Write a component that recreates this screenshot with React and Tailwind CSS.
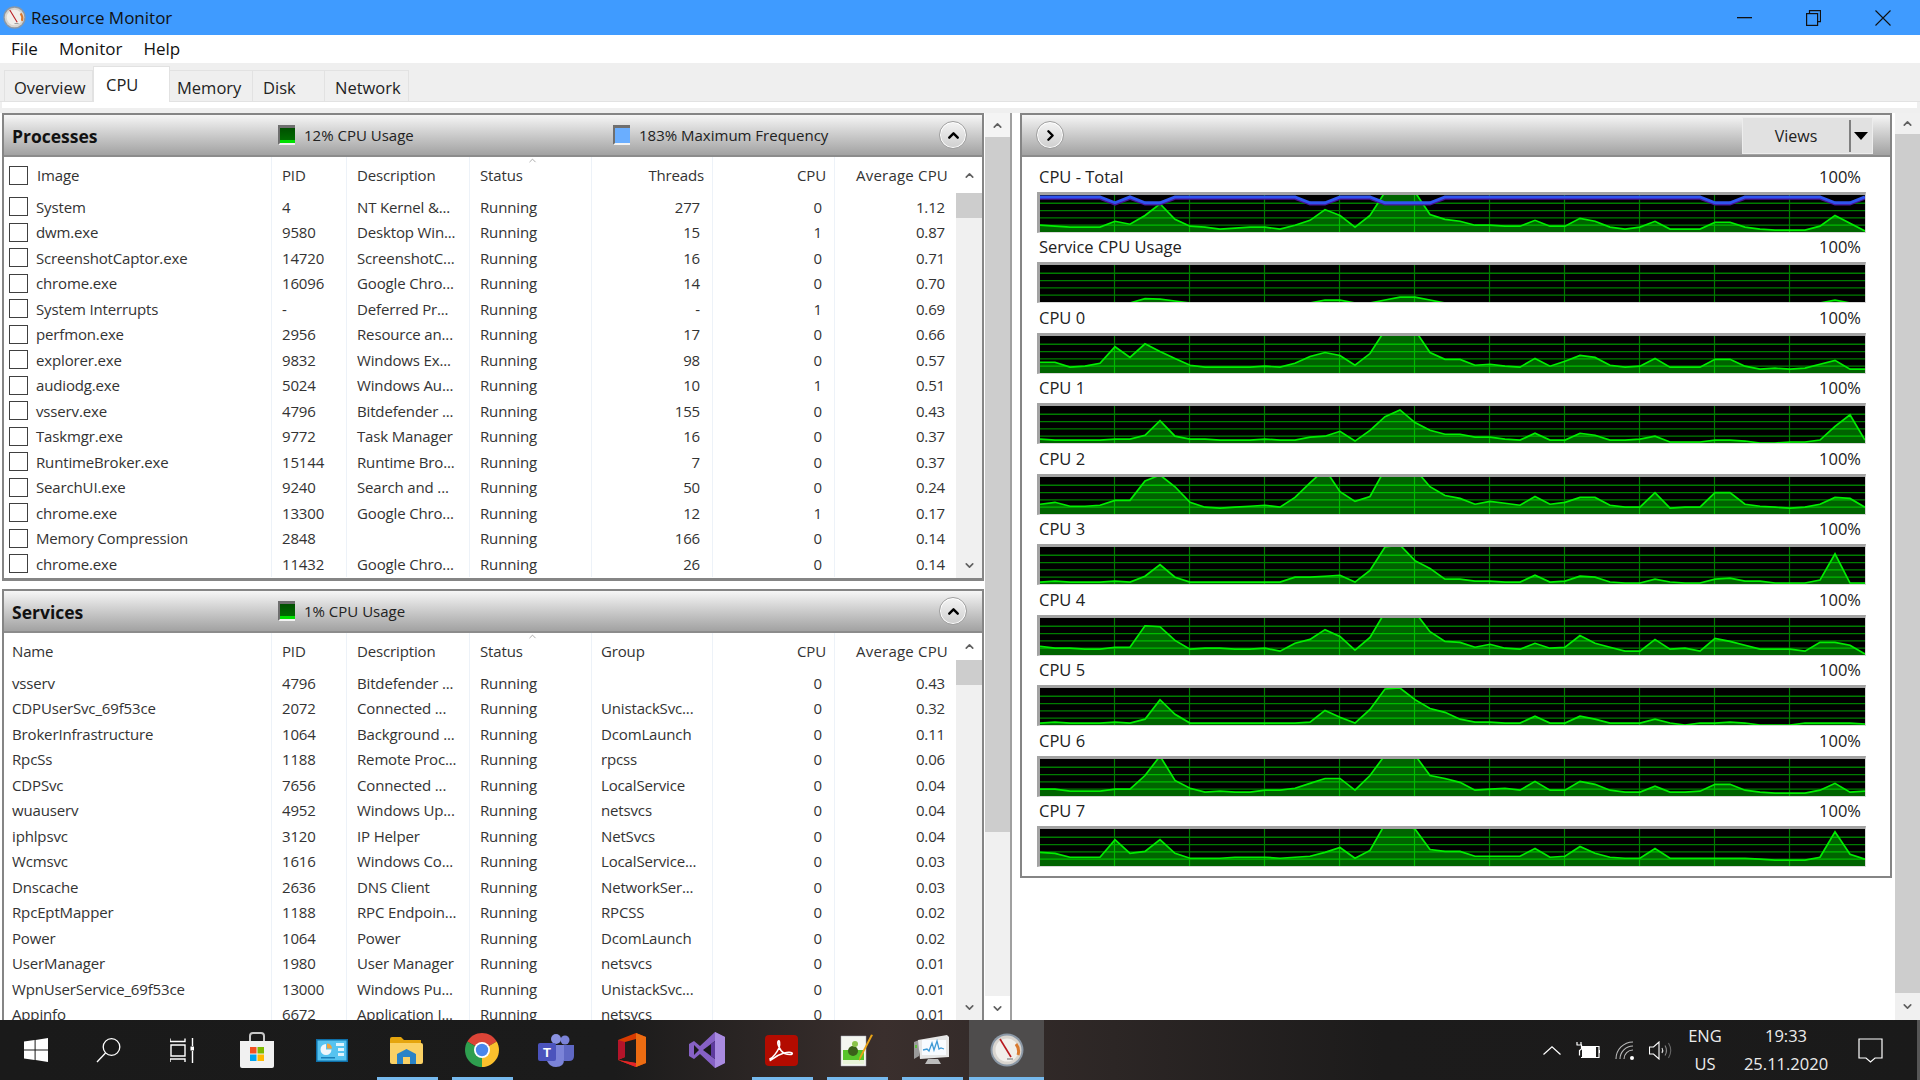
import React from 'react';
import { ChevronUp, ChevronDown, ChevronRight, ChevronUp as Caret } from 'lucide-react';

const COLS = 'grid grid-cols-[268px_75px_123px_122px_121px_122px_121px]';
const CELL = 'h-full border-r border-[#edf2f8] whitespace-nowrap overflow-hidden flex items-center';

const PROCESSES = [
  ['System', '4', 'NT Kernel &...', '277', '0', '1.12'],
  ['dwm.exe', '9580', 'Desktop Win...', '15', '1', '0.87'],
  ['ScreenshotCaptor.exe', '14720', 'ScreenshotC...', '16', '0', '0.71'],
  ['chrome.exe', '16096', 'Google Chro...', '14', '0', '0.70'],
  ['System Interrupts', '-', 'Deferred Pr...', '-', '1', '0.69'],
  ['perfmon.exe', '2956', 'Resource an...', '17', '0', '0.66'],
  ['explorer.exe', '9832', 'Windows Ex...', '98', '0', '0.57'],
  ['audiodg.exe', '5024', 'Windows Au...', '10', '1', '0.51'],
  ['vsserv.exe', '4796', 'Bitdefender ...', '155', '0', '0.43'],
  ['Taskmgr.exe', '9772', 'Task Manager', '16', '0', '0.37'],
  ['RuntimeBroker.exe', '15144', 'Runtime Bro...', '7', '0', '0.37'],
  ['SearchUI.exe', '9240', 'Search and ...', '50', '0', '0.24'],
  ['chrome.exe', '13300', 'Google Chro...', '12', '1', '0.17'],
  ['Memory Compression', '2848', '', '166', '0', '0.14'],
  ['chrome.exe', '11432', 'Google Chro...', '26', '0', '0.14'],
];

const SERVICES = [
  ['vsserv', '4796', 'Bitdefender ...', '', '0', '0.43'],
  ['CDPUserSvc_69f53ce', '2072', 'Connected ...', 'UnistackSvc...', '0', '0.32'],
  ['BrokerInfrastructure', '1064', 'Background ...', 'DcomLaunch', '0', '0.11'],
  ['RpcSs', '1188', 'Remote Proc...', 'rpcss', '0', '0.06'],
  ['CDPSvc', '7656', 'Connected ...', 'LocalService', '0', '0.04'],
  ['wuauserv', '4952', 'Windows Up...', 'netsvcs', '0', '0.04'],
  ['iphlpsvc', '3120', 'IP Helper', 'NetSvcs', '0', '0.04'],
  ['Wcmsvc', '1616', 'Windows Co...', 'LocalService...', '0', '0.03'],
  ['Dnscache', '2636', 'DNS Client', 'NetworkSer...', '0', '0.03'],
  ['RpcEptMapper', '1188', 'RPC Endpoin...', 'RPCSS', '0', '0.02'],
  ['Power', '1064', 'Power', 'DcomLaunch', '0', '0.02'],
  ['UserManager', '1980', 'User Manager', 'netsvcs', '0', '0.01'],
  ['WpnUserService_69f53ce', '13000', 'Windows Pu...', 'UnistackSvc...', '0', '0.01'],
  ['Appinfo', '6672', 'Application I...', 'netsvcs', '0', '0.01'],
];

// heights in px above the graph floor, one sample every 15px
const GRAPHS = [
  { name: 'CPU - Total', blue: true, data: [7,6,5,5,5,11,8,17,29,13,6,5,3,4,5,5,3,7,12,23,17,5,17,41,41,41,18,13,11,7,7,6,6,12,6,6,14,11,5,3,5,11,3,3,3,10,10,5,3,2,2,2,6,17,9,1] },
  { name: 'Service CPU Usage', data: [-1,-1,-1,-1,-1,-1,-1,3.5,3,1,-1,-1,-1,-1,-1,-1,-1,-1,-1,2,2,-1,-1,2,5,5,2,-1,-1,-1,-1,-1,-1,-1,-1,-1,-1,-1,-1,-1,-1,-1,-1,-1,-1,-1,-1,-1,-1,-1,-1,-1,-1,2,-1,-1] },
  { name: 'CPU 0', data: [11,11,6,7,10,27,16,30,22,15,8,6,6,6,6,7,6,10,17,21,18,8,20,44,44,44,21,14,14,8,9,7,6,15,7,12,18,16,8,6,7,15,6,6,6,14,14,7,4,5,4,5,9,13,4,4] },
  { name: 'CPU 1', data: [4,3,3,3,3,4,4,8,23,7,4,4,3,3,3,4,3,3,6,7,12,2,13,27,34,21,13,9,9,6,6,4,3,10,3,3,10,8,3,3,4,7,1,1,1,3,3,2,0,0,1,1,3,17,29,3] },
  { name: 'CPU 2', data: [10,12,8,8,9,14,14,34,40,28,12,7,6,7,8,9,7,17,32,46,23,13,18,46,46,46,28,19,16,10,13,11,9,18,10,12,17,17,9,7,7,22,6,7,7,22,22,10,8,7,6,7,10,17,16,7] },
  { name: 'CPU 3', data: [2,3,2,2,2,3,2,8,20,7,2,2,2,2,2,2,2,7,7,8,9,2,14,38,40,24,16,5,5,3,3,2,2,9,2,3,8,7,2,1,1,5,2,1,1,5,6,3,3,1,1,1,4,31,1,1] },
  { name: 'CPU 4', data: [9,7,7,6,6,8,8,30,29,15,6,7,7,6,6,7,4,12,16,26,19,5,18,44,44,44,24,14,13,8,11,7,6,12,7,8,20,12,8,4,4,16,6,7,4,17,14,10,6,6,6,4,13,13,10,1] },
  { name: 'CPU 5', data: [2,3,2,2,2,3,2,6,26,11,2,2,2,2,2,2,2,2,3,15,8,2,16,37,38,26,17,13,6,3,3,2,2,9,2,2,9,6,2,2,2,6,2,0,2,2,3,2,0,0,0,2,2,2,2,1] },
  { name: 'CPU 6', data: [7,7,5,5,5,7,7,21,41,16,8,4,5,4,4,6,6,8,13,18,18,6,21,42,42,42,21,18,14,6,7,8,6,15,6,6,15,12,6,4,4,10,4,4,5,12,12,6,4,3,3,3,6,13,4,5] },
  { name: 'CPU 7', data: [14,13,9,9,9,27,13,15,27,13,8,8,8,9,9,9,8,9,10,14,19,8,16,43,43,38,17,15,15,10,10,10,10,18,9,10,20,13,9,8,8,18,8,8,8,8,8,8,7,6,6,6,9,35,12,7] },
];

const BLUE_DIPS = [5, 7, 8, 18, 19, 23, 24, 25, 26, 45, 46, 53, 54];

const Graph = ({ name, data, blue }) => {
  const pts = data.map((h, i) => `${i * 15},${38 - h}`).join(' ');
  const vLines = [1, 2, 3, 4, 5, 6, 7, 8, 9, 10].map((n) => n * 75 - 0.5);
  const hLines = [8.5, 16, 23.5, 31];
  const bluePts = data.map((_, i) => `${i * 15},${BLUE_DIPS.includes(i) ? 8 : 2}`).join(' ');
  const clipId = 'fill-' + name.replace(/[^a-zA-Z0-9]/g, '');
  const grid = (color) => (
    <>
      {vLines.map((x) => <line key={x} x1={x} x2={x} y1="0" y2="38" stroke={color} strokeWidth="1.2" />)}
      {hLines.map((y) => <line key={y} x1="0" x2="825" y1={y} y2={y} stroke={color} strokeWidth="1.4" />)}
    </>
  );
  return (
    <div className="h-[70.5px] w-[829px] flex flex-col">
      <div className="h-[29.5px] flex items-end justify-between pl-[2px] pr-[5px] pb-[3px] text-[16.5px] text-[#222] leading-[24px]">
        <span>{name}</span>
        <span>100%</span>
      </div>
      <div className="h-[41px] w-[829px] border-t-[3px] border-l-[3px] border-r border-b border-t-[#a3a3a3] border-l-[#a3a3a3] border-r-[#d8d8d8] border-b-[#d8d8d8] bg-black">
        <svg width="825" height="37" viewBox="0 0 825 38" preserveAspectRatio="none" className="block">
          <defs>
            <clipPath id={clipId}><polygon points={`0,38 ${pts} 825,38`} /></clipPath>
          </defs>
          {grid('#007c00')}
          <polygon points={`0,38 ${pts} 825,38`} fill="#006400" />
          <g clipPath={`url(#${clipId})`}>{grid('#00bb00')}</g>
          <polyline points={pts} fill="none" stroke="#00ee00" strokeWidth="1.7" />
          {blue && (
            <>
              <polyline points={bluePts} transform="translate(0,1.6)" fill="none" stroke="#4a1296" strokeWidth="2.5" />
              <polyline points={bluePts} fill="none" stroke="#2f55f0" strokeWidth="3" />
            </>
          )}
        </svg>
      </div>
    </div>
  );
};

const RoundBtn = ({ children }) => (
  <div className="w-[28px] h-[28px] rounded-full border border-[#9f9f9f] bg-linear-to-b from-[#f4f4f4] to-[#cfcfcf] shadow-[inset_0_0_0_1px_#ffffff] flex items-center justify-center text-black">
    {children}
  </div>
);

const Checkbox = () => <span className="w-[19px] h-[19px] shrink-0 border-[1.5px] border-[#404040] bg-white" />;

const GreenChip = () => (
  <span className="w-[17px] h-[20px] border-t-[3px] border-l-[2px] border-[#6f6f6f] border-b-[2px] border-b-[#f2f2f2] bg-[linear-gradient(#004f00_0%,#006c00_78%,#00e000_78%)]" />
);

const PanelHeader = ({ title, children }) => (
  <div className="h-[42px] shrink-0 flex items-center bg-linear-to-b from-[#f6f6f6] to-[#a2a2a2] border-b-2 border-[#8c8c8c] relative">
    <span className="w-[274px] pl-[8px] pt-[2px] font-bold text-[17.5px] text-[#111]">{title}</span>
    {children}
    <div className="ml-auto mr-[15px]">
      <RoundBtn><ChevronUp size={17} strokeWidth={3.4} /></RoundBtn>
    </div>
  </div>
);

const TableScroll = ({ headH }) => (
  <div className="w-[26px] shrink-0 bg-[#f0f0f0] flex flex-col">
    <div className={`${headH} bg-white flex items-center justify-center text-[#606060]`}><ChevronUp size={13} strokeWidth={3} /></div>
    <div className="h-[25px] bg-[#cdcdcd]" />
    <div className="flex-1" />
    <div className="h-[26px] flex items-center justify-center text-[#606060]"><ChevronDown size={13} strokeWidth={3} /></div>
  </div>
);

const HeadCell = ({ children, className = '' }) => <div className={`${CELL} ${className}`}>{children}</div>;

const ProcessesPanel = () => (
  <section className="h-[468px] shrink-0 border-t-2 border-l-2 border-r-2 border-b-[3px] border-[#858585] flex flex-col overflow-hidden bg-white">
    <PanelHeader title="Processes">
      <GreenChip />
      <span className="ml-[9px] w-[309px] text-[15px] text-[#222]">12% CPU Usage</span>
      <span className="w-[17px] h-[20px] border-t-[3px] border-l-[2px] border-[#6f6f6f] border-b-[2px] border-b-[#f2f2f2] bg-[#6aaeff]" />
      <span className="ml-[9px] text-[15px] text-[#222]">183% Maximum Frequency</span>
    </PanelHeader>
    <div className="flex-1 flex min-h-0 text-[15px] text-[#333] tracking-[-0.15px]">
      <div className="w-[952px] shrink-0">
        <div className={`${COLS} h-[37px] relative`}>
          <HeadCell className="pl-[5px] gap-[9px]"><Checkbox />Image</HeadCell>
          <HeadCell className="pl-[10px]">PID</HeadCell>
          <HeadCell className="pl-[10px]">Description</HeadCell>
          <HeadCell className="pl-[10px]">Status</HeadCell>
          <HeadCell className="justify-end pr-[8px]">Threads</HeadCell>
          <HeadCell className="justify-end pr-[8px]">CPU</HeadCell>
          <HeadCell className="justify-end pr-[8px] border-r-0 tracking-[0.2px]">Average CPU</HeadCell>
          <Caret size={11} strokeWidth={1.5} className="absolute left-[523px] -top-[2px] text-[#888]" />
        </div>
        {PROCESSES.map((r, i) => (
          <div key={i} className={`${COLS} h-[25.5px]`}>
            <div className={`${CELL} pl-[5px] gap-[8px]`}><Checkbox />{r[0]}</div>
            <div className={`${CELL} pl-[10px]`}>{r[1]}</div>
            <div className={`${CELL} pl-[10px]`}>{r[2]}</div>
            <div className={`${CELL} pl-[10px]`}>Running</div>
            <div className={`${CELL} justify-end pr-[12px]`}>{r[3]}</div>
            <div className={`${CELL} justify-end pr-[12px]`}>{r[4]}</div>
            <div className={`${CELL} justify-end pr-[11px] border-r-0`}>{r[5]}</div>
          </div>
        ))}
      </div>
      <TableScroll headH="h-[36px]" />
    </div>
  </section>
);

const ServicesPanel = () => (
  <section className="flex-1 min-h-0 border-t-2 border-l-2 border-r-2 border-[#858585] flex flex-col overflow-hidden bg-white">
    <PanelHeader title="Services">
      <GreenChip />
      <span className="ml-[9px] text-[15px] text-[#222]">1% CPU Usage</span>
    </PanelHeader>
    <div className="flex-1 flex min-h-0 text-[15px] text-[#333] tracking-[-0.15px]">
      <div className="w-[952px] shrink-0">
        <div className={`${COLS} h-[37px] relative`}>
          <HeadCell className="pl-[8px]">Name</HeadCell>
          <HeadCell className="pl-[10px]">PID</HeadCell>
          <HeadCell className="pl-[10px]">Description</HeadCell>
          <HeadCell className="pl-[10px]">Status</HeadCell>
          <HeadCell className="pl-[9px]">Group</HeadCell>
          <HeadCell className="justify-end pr-[8px]">CPU</HeadCell>
          <HeadCell className="justify-end pr-[8px] border-r-0 tracking-[0.2px]">Average CPU</HeadCell>
          <Caret size={11} strokeWidth={1.5} className="absolute left-[523px] -top-[2px] text-[#888]" />
        </div>
        {SERVICES.map((r, i) => (
          <div key={i} className={`${COLS} h-[25.5px]`}>
            <div className={`${CELL} pl-[8px]`}>{r[0]}</div>
            <div className={`${CELL} pl-[10px]`}>{r[1]}</div>
            <div className={`${CELL} pl-[10px]`}>{r[2]}</div>
            <div className={`${CELL} pl-[10px]`}>Running</div>
            <div className={`${CELL} pl-[9px]`}>{r[3]}</div>
            <div className={`${CELL} justify-end pr-[12px]`}>{r[4]}</div>
            <div className={`${CELL} justify-end pr-[11px] border-r-0`}>{r[5]}</div>
          </div>
        ))}
      </div>
      <TableScroll headH="h-[27px]" />
    </div>
  </section>
);

const Gauge = ({ size }) => (
  <svg width={size} height={size} viewBox="0 0 34 34">
    <circle cx="17" cy="17" r="16.5" fill="#8b98a6" />
    <circle cx="17" cy="17" r="14.5" fill="#d9d5cf" />
    <circle cx="17" cy="17" r="11.5" fill="#f1efeb" />
    <path d="M26 11a12 12 0 0 1 2 11" fill="none" stroke="#d9792f" strokeWidth="3" />
    <path d="M10 6l11 18" stroke="#b81a1f" strokeWidth="1.6" />
    <path d="M17 26l6 0" stroke="#999" strokeWidth="1.5" />
  </svg>
);

const Slot = ({ w = 'w-[75px]', open, active, children }) => (
  <div className={`${w} h-full relative flex items-center justify-center ${active ? 'bg-[#4e4c4c]' : ''}`}>
    {children}
    {open && <span className={`absolute bottom-0 h-[3px] bg-[#76b9ed] ${active ? 'left-0 right-0' : 'left-[8px] right-[6px]'}`} />}
  </div>
);

const Taskbar = () => (
  <footer className="h-[60px] shrink-0 flex items-center text-[#ececec] bg-[linear-gradient(90deg,#1a1a1a_0%,#1b1b1b_32%,#3a2f2d_46%,#2c2625_58%,#1c1b1b_72%,#1a1a1a_100%)]">
    <Slot w="w-[72px]">
      <svg width="24" height="24" viewBox="0 0 24 24" fill="#fff"><path d="M0 3.6l10.6-1.5v9.4H0zM11.6 2L24 0v11.5H11.6zM0 12.5h10.6v9.5L0 20.4zM11.6 12.5H24V24l-12.4-1.9z" /></svg>
    </Slot>
    <Slot w="w-[72px]">
      <svg width="25" height="25" viewBox="0 0 25 25" fill="none" stroke="#fff" strokeWidth="1.3"><circle cx="15.5" cy="9" r="8.3" /><path d="M9.5 15L1 24" /></svg>
    </Slot>
    <Slot>
      <svg width="24" height="25" viewBox="0 0 24 25" fill="none" stroke="#fff" strokeWidth="1.4"><path d="M0 3.5h15V.5M0 3.5V.5M1 7h14v11H1zM0 24v-3h15v3M22.5 0v8M22.5 13v12" /><rect x="20.5" y="8.5" width="3.5" height="4" fill="#fff" stroke="none" /></svg>
    </Slot>
    <Slot>
      <svg width="36" height="36" viewBox="0 0 36 36"><path d="M11 9V4q0-3 3-3h8q3 0 3 3v5" fill="none" stroke="#c9c9c9" strokeWidth="2" /><path d="M1 9h34v25q0 2-2 2H3q-2 0-2-2z" fill="#f1f1f1" /><rect x="11" y="15" width="6.5" height="6.5" fill="#f25022" /><rect x="18.5" y="15" width="6.5" height="6.5" fill="#7fba00" /><rect x="11" y="22.5" width="6.5" height="6.5" fill="#00a4ef" /><rect x="18.5" y="22.5" width="6.5" height="6.5" fill="#ffb900" /></svg>
    </Slot>
    <Slot>
      <svg width="32" height="23" viewBox="0 0 32 23"><rect width="32" height="23" fill="#0e6fa8" /><rect x="1.5" y="1.5" width="29" height="20" fill="#56c3f0" /><path d="M10 5a5.5 5.5 0 1 0 5.5 5.5H10z" fill="#f0f6fa" /><path d="M11 4.5a5 5 0 0 1 5 5h-5z" fill="#f2a33a" /><rect x="20" y="4" width="8" height="3" fill="#dff3fc" /><rect x="22" y="9" width="6" height="3" fill="#dff3fc" /><rect x="22" y="14" width="6" height="3" fill="#dff3fc" /><rect x="5" y="18" width="14" height="1.5" fill="#1a7fb8" /></svg>
    </Slot>
    <Slot open>
      <svg width="33" height="27" viewBox="0 0 33 27"><path d="M0 2q0-2 2-2h9l3 3h17v5H0z" fill="#e5a50e" /><path d="M0 6h31q2 0 2 2v17q0 2-2 2H2q-2 0-2-2z" fill="#fad165" /><path d="M7 27V17l9.5-5 9.5 5v10h-6v-7h-7v7z" fill="#2a83c7" /><rect x="13" y="20" width="7" height="7" fill="#fad165" /></svg>
    </Slot>
    <Slot open>
      <svg width="34" height="34" viewBox="0 0 34 34"><path d="M17 17L2.3 8.5A17 17 0 0 1 31.7 8.5z" fill="#db4437" /><path d="M17 17L31.7 8.5A17 17 0 0 1 17 34z" fill="#fbc02d" /><path d="M17 17L17 34A17 17 0 0 1 2.3 8.5z" fill="#2e9e4f" /><circle cx="17" cy="17" r="8" fill="#fff" /><circle cx="17" cy="17" r="6.2" fill="#4a86ec" /></svg>
    </Slot>
    <Slot>
      <svg width="37" height="33" viewBox="0 0 37 33"><circle cx="27" cy="6" r="4.5" fill="#7b83d8" /><circle cx="18" cy="5" r="5" fill="#8a92e0" /><path d="M24 11h12v11q0 5-5 5h-5z" fill="#5f68c4" /><path d="M9 11h17v15q0 7-8 7-6 0-9-6z" fill="#7b83d8" /><rect y="9" width="18" height="18" rx="2" fill="#4b53bc" /><text x="9" y="23" fontFamily="'Liberation Sans',sans-serif" fontWeight="700" fontSize="13" fill="#fff" textAnchor="middle">T</text></svg>
    </Slot>
    <Slot>
      <svg width="28" height="34" viewBox="0 0 28 34"><path d="M0 7L18 0l10 4v26l-10 4L0 27l18 3V6L7 9v15l-7 3z" fill="#d83b01" /><path d="M18 0l10 4v26l-10 4z" fill="#eb6c12" /><path d="M0 7l7 2v15l-7 3z" fill="#b3142a" /><path d="M0 27l18 3v4z" fill="#e3242b" /></svg>
    </Slot>
    <Slot>
      <svg width="36" height="36" viewBox="0 0 36 36"><path d="M26 0l10 5v26l-10 5L11 22l-6 5-5-3V12l5-3 6 5z" fill="#8661c5" /><path d="M26 9v18l-12-9z" fill="#1a1a1a" /><path d="M5 13v10l5-5z" fill="#1a1a1a" /><path d="M26 0l10 5v26l-10 5z" fill="#a98be0" /><path d="M26 9v18l-4-3V12z" fill="#5e3a9e" /></svg>
    </Slot>
    <Slot open>
      <svg width="33" height="31" viewBox="0 0 33 31"><rect width="33" height="31" rx="4" fill="#b30b00" /><path d="M5 24q5-3 9-11 1-3 .5-6-.5-2-1.500-.5-1 3 3 9 3 4 9 4 3 0 2-1.500-2-1.500-8 0-7 2-13 7-1 1-.5 0z" fill="none" stroke="#fff" strokeWidth="1.6" /></svg>
    </Slot>
    <Slot open>
      <svg width="34" height="33" viewBox="0 0 34 33"><path d="M1 2h25v30H1z" fill="#f4f6f0" stroke="#aab" strokeWidth=".5" /><path d="M3 16h21v14H3z" fill="#57c42a" /><path d="M3 26h21v4H3z" fill="#e8f4d8" /><circle cx="13" cy="17" r="5" fill="#3b5f1a" /><circle cx="15" cy="10" r="3" fill="#8bc34a" /><path d="M33 1L21 24l-2 3 .5-4L31 .5z" fill="#e8a317" /></svg>
    </Slot>
    <Slot open>
      <svg width="35" height="30" viewBox="0 0 35 30"><path d="M0 7l5-2v16l-5 3z" fill="#9a9a9a" /><path d="M4 5L33 0l2 2v20L6 24z" fill="#e6e6e6" /><rect x="8" y="5" width="24" height="15" fill="#f8fbff" /><path d="M9 15l4-1 2 2 3-8 2 7 3-9 2 8 2-1 3 1" fill="none" stroke="#3f9ad6" strokeWidth="1.3" /><path d="M14 24h10l3 5H11z" fill="#bcbcbc" /><rect x="1" y="10" width="2" height="3" fill="#5fbf3f" /></svg>
    </Slot>
    <Slot open active><Gauge size={34} /></Slot>

    <div className="ml-auto flex items-center h-full">
      <svg width="18" height="9" viewBox="0 0 18 9" fill="none" stroke="#fff" strokeWidth="1.2" className="mr-[15px]"><path d="M.5 8.500L9 .8l8.500 7.700" /></svg>
      <svg width="24" height="17" viewBox="0 0 24 17" fill="none" stroke="#fff" strokeWidth="1.2" className="mr-[15px]"><path d="M5 4.500h18v11H5" /><rect x="6" y="5" width="14" height="10" fill="#fff" stroke="none" /><path d="M1 0v3M5 0v3M.5 3h5v4l-2 1.500v5" /><path d="M23.500 8v3" /></svg>
      <svg width="20" height="19" viewBox="0 0 20 19" fill="none" stroke="#bbb" strokeWidth="1.1" className="mr-[13.5px]"><path d="M1 18A17 17 0 0 1 18 1M5 18A13 13 0 0 1 18 5M9 18a9 9 0 0 1 9-9" /><circle cx="17" cy="17" r="2" fill="#fff" stroke="none" /></svg>
      <svg width="23" height="19" viewBox="0 0 23 19" fill="none" strokeWidth="1.1" className="mr-[8.5px]"><path d="M.5 6h4L10 1v17l-5.500-5h-4z" stroke="#fff" /><path d="M13 7q1.500 2.500 0 5" stroke="#ddd" /><path d="M16 4.500q3 5 0 10" stroke="#888" /><path d="M19.500 2q4.500 7.500 0 15" stroke="#666" /></svg>
      <div className="w-[50px] flex flex-col items-center text-[16.5px] leading-[28px]">
        <span>ENG</span>
        <span>US</span>
      </div>
      <div className="w-[100px] ml-[6px] flex flex-col items-center text-[16.5px] leading-[28px]">
        <span>19:33</span>
        <span>25.11.2020</span>
      </div>
      <svg width="25" height="25" viewBox="0 0 25 25" fill="none" stroke="#fff" strokeWidth="1.2" className="ml-[21.5px] mr-[34.5px]"><path d="M1 1h23v19h-7l-4.500 4-4.500-4H1z" /></svg>
      <span className="w-[3px] h-full bg-[#555]" />
    </div>
  </footer>
);

export default function App() {
  return (
    <div className="w-[1920px] h-[1080px] flex flex-col overflow-hidden bg-white font-['Open_Sans',sans-serif]">
      <header className="h-[35px] shrink-0 bg-[#3f9bff] flex items-center text-[#111]">
        <span className="ml-[3px] mr-[5px]"><Gauge size={23} /></span>
        <span className="text-[17px]">Resource Monitor</span>
        <div className="ml-auto flex items-center mr-[29px] gap-[54px]">
          <svg width="15" height="2" viewBox="0 0 15 2"><rect width="15" height="1.3" fill="#111" /></svg>
          <svg width="15" height="16" viewBox="0 0 15 16" fill="none" stroke="#111" strokeWidth="1.2"><rect x=".6" y="3.600" width="11" height="11.800" /><path d="M3.500 3.500V.6h11v11h-3" /></svg>
          <svg width="16" height="16" viewBox="0 0 16 16" fill="none" stroke="#111" strokeWidth="1.100"><path d="M.5.500l15 15M15.500.500l-15 15" /></svg>
        </div>
      </header>

      <nav className="h-[28px] shrink-0 flex items-center pl-[11px] gap-[21px] text-[17px] text-[#111]">
        <span>File</span>
        <span>Monitor</span>
        <span>Help</span>
      </nav>

      <div className="h-[50px] shrink-0 bg-[#efefef] flex flex-col">
        <div className="h-[39px] flex items-end pl-[4px] text-[16.5px] text-[#222] border-b border-[#e2e2e2]">
          <div className="w-[89px] h-[31px] pl-[9px] pt-[4px] border border-b-0 border-[#e2e2e2] flex items-center">Overview</div>
          <div className="w-[77px] h-[36px] -mb-px pl-[12px] pt-[2px] bg-white border border-b-0 border-[#e2e2e2] flex items-center">CPU</div>
          <div className="w-[83px] h-[31px] pl-[7px] pt-[4px] border-r border-t border-[#e2e2e2] flex items-center">Memory</div>
          <div className="w-[72px] h-[31px] pl-[10px] pt-[4px] border-r border-t border-[#e2e2e2] flex items-center">Disk</div>
          <div className="w-[84px] h-[31px] pl-[10px] pt-[4px] border-r border-t border-[#e2e2e2] flex items-center">Network</div>
        </div>
        <div className="h-[6px] bg-white ml-[2px] mr-[3px]" />
      </div>

      <main className="flex-1 min-h-0 flex">
        <div className="w-[984px] shrink-0 pl-[2px] flex flex-col gap-[8px]">
          <ProcessesPanel />
          <ServicesPanel />
        </div>
        <div className="w-[27px] ml-[1px] shrink-0 border-r-2 border-[#a0a0a0] bg-[#f0f0f0] flex flex-col">
          <div className="h-[24px] bg-[#f4f4f4] flex items-center justify-center text-[#606060]"><ChevronUp size={13} strokeWidth={3} /></div>
          <div className="h-[695px] bg-[#cdcdcd]" />
          <div className="flex-1" />
          <div className="h-[24px] bg-white flex items-center justify-center text-[#606060]"><ChevronDown size={13} strokeWidth={3} /></div>
        </div>
        <div className="w-[872px] ml-[8px] shrink-0">
          <section className="h-[765px] border-t-2 border-l-2 border-r-2 border-b-2 border-[#858585] bg-white">
            <div className="h-[42px] flex items-center bg-linear-to-b from-[#f6f6f6] to-[#a2a2a2] border-b-2 border-[#8c8c8c] pl-[14px]">
              <RoundBtn><ChevronRight size={17} strokeWidth={3.4} /></RoundBtn>
              <div className="ml-auto mr-[17px] w-[131px] h-[37px] mt-[1px] bg-[#e1e1e1] border border-[#ededed] flex items-center text-[16px] text-[#222]">
                <span className="w-[106px] text-center">Views</span>
                <span className="w-[2px] h-[32px] bg-[#808080]" />
                <span className="ml-[3px] border-x-[7px] border-x-transparent border-t-[8px] border-t-black" />
              </div>
            </div>
            <div className="pl-[15px] pt-[5px]">
              {GRAPHS.map((g) => <Graph key={g.name} {...g} />)}
            </div>
          </section>
        </div>
        <div className="w-[25px] ml-[3px] shrink-0 bg-[#f0f0f0] flex flex-col">
          <div className="h-[21px] flex items-center justify-center text-[#606060]"><ChevronUp size={13} strokeWidth={3} /></div>
          <div className="flex-1 bg-[#cdcdcd]" />
          <div className="h-[27px] flex items-center justify-center text-[#606060]"><ChevronDown size={13} strokeWidth={3} /></div>
        </div>
      </main>

      <Taskbar />
    </div>
  );
}
